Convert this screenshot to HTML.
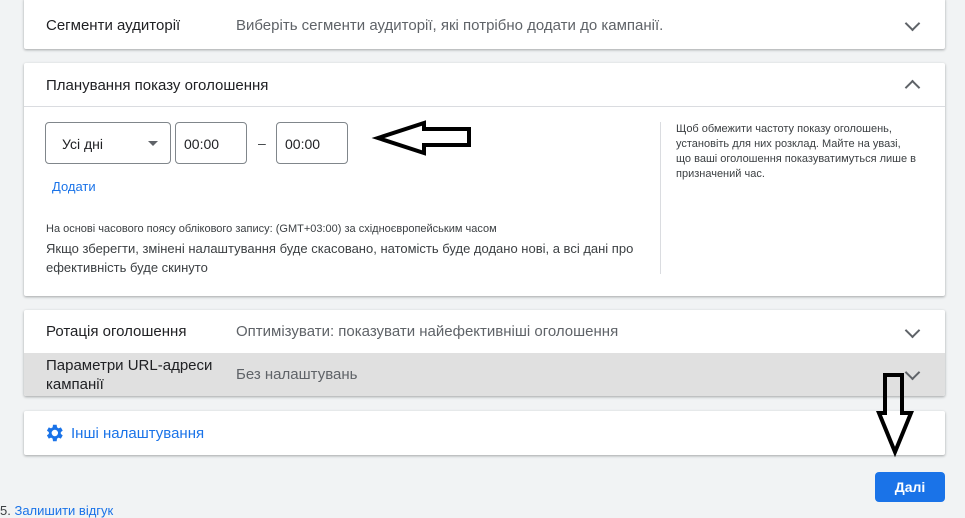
<!DOCTYPE html>
<html><head><meta charset="utf-8"><style>
body{margin:0;width:965px;height:517px;background:#f1f3f4;font-family:"Liberation Sans",Arial,sans-serif;position:relative;overflow:hidden;color:#3c4043}
.card{position:absolute;left:24px;width:921px;background:#fff;box-shadow:0 1px 2px rgba(60,64,67,.3),0 1px 3px rgba(60,64,67,.15);border-radius:2px}
.t{position:absolute;font-size:15px;color:#202124}
.s{position:absolute;font-size:15px;color:#5f6368}
.chev{position:absolute;width:9px;height:9px;border-right:2px solid #5f6368;border-bottom:2px solid #5f6368;transform:rotate(45deg)}
.up{transform:rotate(-135deg)}
.box{position:absolute;border:1px solid #80868b;border-radius:4px;font-size:14px;color:#202124;box-sizing:border-box}
</style></head><body>
<div class="card" style="top:-2px;height:51px">
<div class="t" style="left:22px;top:19px">Сегменти аудиторії</div>
<div class="s" style="left:212px;top:19px">Виберіть сегменти аудиторії, які потрібно додати до кампанії.</div>
<div class="chev" style="left:883px;top:20px"></div></div>

<div class="card" style="top:63px;height:233px">
<div style="position:absolute;left:0;right:0;top:43px;border-top:1px solid #dadce0"></div>
<div class="t" style="left:22px;top:14px">Планування показу оголошення</div>
<div class="chev up" style="left:883px;top:19px"></div>
<div class="box" style="left:21px;top:59px;width:126px;height:42px;padding:13px 0 0 16px">Усі дні
<div style="position:absolute;left:102px;top:18px;border-left:5px solid transparent;border-right:5px solid transparent;border-top:5px solid #5f6368"></div></div>
<div class="box" style="left:151px;top:59px;width:72px;height:42px;padding:13px 0 0 8px">00:00</div>
<div style="position:absolute;left:234px;top:72px;font-size:14px">–</div>
<div class="box" style="left:252px;top:59px;width:72px;height:42px;padding:13px 0 0 8px">00:00</div>
<div style="position:absolute;left:28px;top:116px;font-size:13px;color:#1a73e8">Додати</div>
<div style="position:absolute;left:22px;top:160px;font-size:11px;color:#3c4043">На основі часового поясу облікового запису: (GMT+03:00) за східноєвропейським часом</div>
<div style="position:absolute;left:22px;top:176px;font-size:13px;line-height:19px;color:#3c4043;width:600px">Якщо зберегти, змінені налаштування буде скасовано, натомість буде додано нові, а всі дані про ефективність буде скинуто</div>
<div style="position:absolute;left:636px;top:59px;height:152px;border-left:1px solid #dadce0"></div>
<div style="position:absolute;left:652px;top:59px;width:240px;font-size:11px;line-height:15px;color:#3c4043">Щоб обмежити частоту показу оголошень, установіть для них розклад. Майте на увазі, що ваші оголошення показуватимуться лише в призначений час.</div>
</div>

<div class="card" style="top:310px;height:86px;overflow:hidden">
<div class="t" style="left:22px;top:13px">Ротація оголошення</div>
<div class="s" style="left:212px;top:13px">Оптимізувати: показувати найефективніші оголошення</div>
<div class="chev" style="left:883px;top:15px"></div>
<div style="position:absolute;left:0;right:0;top:43px;height:43px;background:#e0e0e0">
<div class="t" style="left:22px;top:3px;line-height:19px">Параметри URL-адреси<br>кампанії</div>
<div class="s" style="left:212px;top:13px">Без налаштувань</div>
<div class="chev" style="left:883px;top:14px"></div></div></div>

<div class="card" style="top:411px;height:44px">
<svg style="position:absolute;left:19px;top:11px" width="22" height="22" viewBox="0 0 24 24"><path fill="#1a73e8" d="M19.4 13a7.5 7.5 0 000-2l2.1-1.6-2-3.5-2.5 1a7 7 0 00-1.7-1L14.9 3h-4l-.4 2.9a7 7 0 00-1.7 1l-2.5-1-2 3.5L6.4 11a7.5 7.5 0 000 2l-2.1 1.6 2 3.5 2.5-1a7 7 0 001.7 1l.4 2.9h4l.4-2.9a7 7 0 001.7-1l2.5 1 2-3.5zM12.9 15.5a3.5 3.5 0 110-7 3.5 3.5 0 010 7z"/></svg>
<div style="position:absolute;left:47px;top:14px;font-size:15px;color:#1a73e8">Інші налаштування</div></div>

<div style="position:absolute;left:875px;top:472px;width:70px;height:30px;background:#1a73e8;border-radius:4px;color:#fff;font-weight:bold;font-size:14px;text-align:center;line-height:30px">Далі</div>
<div style="position:absolute;left:0;top:503px;font-size:13px;color:#3c4043">5. <span style="color:#1a73e8">Залишити відгук</span></div>

<svg style="position:absolute;left:0;top:0" width="965" height="517">
<path d="M378 138 L424 123 L424 129 L469 129 L469 145 L424 145 L424 153 Z" fill="none" stroke="#000" stroke-width="4" stroke-linejoin="miter"/>
<path d="M885 375 L902 375 L902 413 L911 413 L895 452 L879 413 L885 413 Z" fill="none" stroke="#000" stroke-width="4"/>
</svg>
</body></html>
